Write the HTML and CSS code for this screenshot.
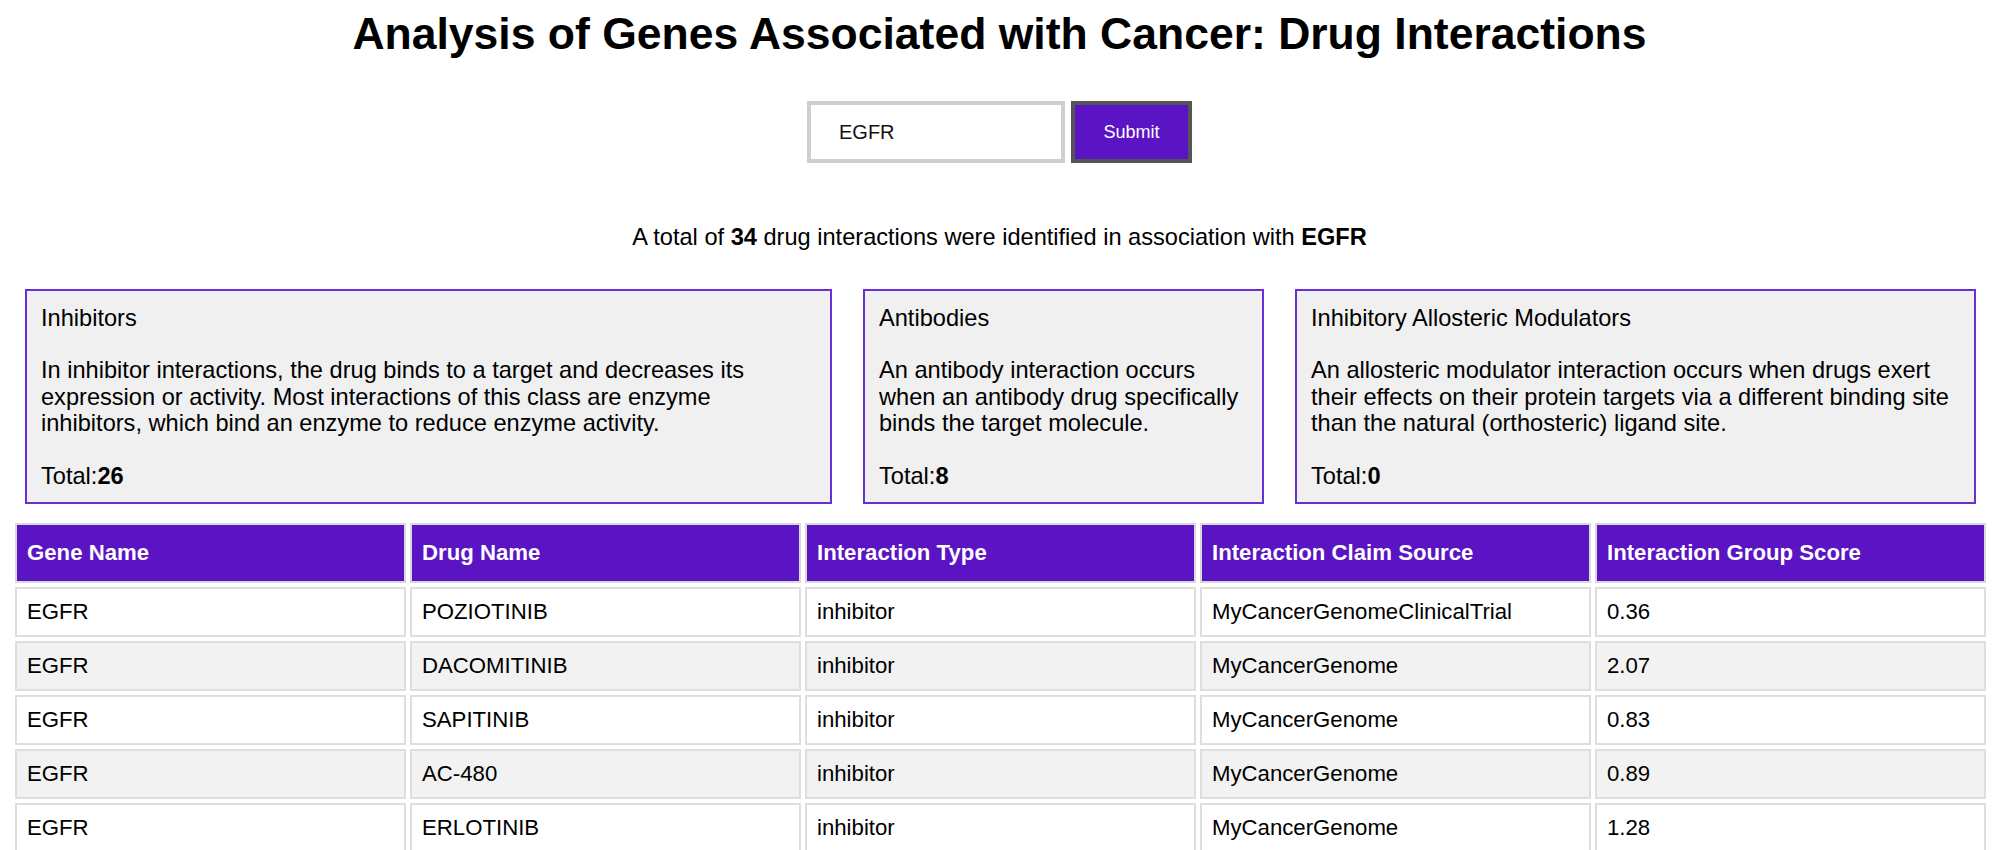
FILE: index.html
```html
<!DOCTYPE html>
<html lang="en">
<head>
<meta charset="utf-8">
<title>Analysis of Genes Associated with Cancer: Drug Interactions</title>
<link rel="stylesheet" href="styles.css">
</head>
<body>
<h1 class="title">Analysis of Genes Associated with Cancer: Drug Interactions</h1>
<form class="search">
  <input class="search-input" type="text" value="EGFR">
  <button class="search-btn" type="button">Submit</button>
</form>
<p class="summary">A total of <b>34</b> drug interactions were identified in association with <b>EGFR</b></p>
<div class="cards">
  <div class="card card-1">
    <p class="card-title">Inhibitors</p>
    <p class="card-text">In inhibitor interactions, the drug binds to a target and decreases its expression or activity. Most interactions of this class are enzyme inhibitors, which bind an enzyme to reduce enzyme activity.</p>
    <p class="card-total">Total:<b>26</b></p>
  </div>
  <div class="card card-2">
    <p class="card-title">Antibodies</p>
    <p class="card-text">An antibody interaction occurs when an antibody drug specifically binds the target molecule.</p>
    <p class="card-total">Total:<b>8</b></p>
  </div>
  <div class="card card-3">
    <p class="card-title">Inhibitory Allosteric Modulators</p>
    <p class="card-text">An allosteric modulator interaction occurs when drugs exert their effects on their protein targets via a different binding site than the natural (orthosteric) ligand site.</p>
    <p class="card-total">Total:<b>0</b></p>
  </div>
</div>
<div class="table-wrap">
<table class="results">
  <thead>
    <tr><th>Gene Name</th><th>Drug Name</th><th>Interaction Type</th><th>Interaction Claim Source</th><th>Interaction Group Score</th></tr>
  </thead>
  <tbody>
    <tr><td>EGFR</td><td>POZIOTINIB</td><td>inhibitor</td><td>MyCancerGenomeClinicalTrial</td><td>0.36</td></tr>
    <tr><td>EGFR</td><td>DACOMITINIB</td><td>inhibitor</td><td>MyCancerGenome</td><td>2.07</td></tr>
    <tr><td>EGFR</td><td>SAPITINIB</td><td>inhibitor</td><td>MyCancerGenome</td><td>0.83</td></tr>
    <tr><td>EGFR</td><td>AC-480</td><td>inhibitor</td><td>MyCancerGenome</td><td>0.89</td></tr>
    <tr><td>EGFR</td><td>ERLOTINIB</td><td>inhibitor</td><td>MyCancerGenome</td><td>1.28</td></tr>
  </tbody>
</table>
</div>
</body>
</html>
```
FILE: styles.css
```css
html, body {
  margin: 0;
  padding: 0;
  background: #ffffff;
  color: #000000;
  font-family: "Liberation Sans", Arial, Helvetica, sans-serif;
}

.title {
  margin: 9px 0 0;
  font-size: 44.5px;
  line-height: 50px;
  font-weight: bold;
  text-align: center;
}

.search {
  display: flex;
  justify-content: center;
  gap: 6px;
  margin-top: 42px;
}

.search-input {
  box-sizing: border-box;
  width: 258px;
  height: 62px;
  border: 4px solid #cfcfcf;
  padding: 0 0 0 28px;
  font-family: inherit;
  font-size: 20px;
  color: #111;
  background: #fff;
  outline: none;
}

.search-btn {
  box-sizing: border-box;
  width: 121px;
  height: 62px;
  border: 4px solid #555555;
  background: #5a14c4;
  color: #ffffff;
  font-family: inherit;
  font-size: 18px;
  padding: 0;
}

.summary {
  margin: 61px 0 0;
  text-align: center;
  font-size: 23.6px;
  line-height: 27px;
}

.cards {
  display: grid;
  grid-template-columns: 807px 401px 1fr;
  column-gap: 31px;
  margin: 38px 23px 0 25px;
}

.card {
  border: 2px solid #6a2ed6;
  background: #f0f0f0;
  padding: 14px 14px 12px;
}

.card p {
  margin: 0;
  font-size: 23.6px;
  line-height: 26.8px;
}

.card .card-text {
  margin: 25px 0 26px;
}

.table-wrap {
  margin-top: 15px;
  padding: 0 9px 0 11px;
}

.results {
  width: 100%;
  table-layout: fixed;
  border-collapse: separate;
  border-spacing: 4px;
  font-size: 22.2px;
}

.results th {
  background: #5a14c4;
  color: #ffffff;
  text-align: left;
  font-weight: bold;
  height: 60px;
  box-sizing: border-box;
  padding: 0 10px;
  border: 2px solid #d9d9d9;
}

.results td {
  height: 50px;
  box-sizing: border-box;
  padding: 0 10px;
  border: 2px solid #dedede;
  background: #ffffff;
}

.results tbody tr:nth-child(even) td {
  background: #f2f2f2;
}
```
